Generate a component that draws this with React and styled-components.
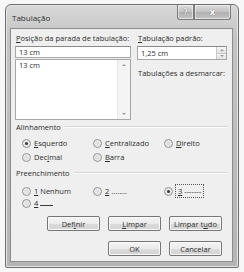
import styled, { createGlobalStyle } from "styled-components";

const GlobalStyle = createGlobalStyle`
  body {
    margin: 0;
    background: #f7f7f7;
    font-family: "Open Sans", "Noto Sans", sans-serif;
    font-size: 7.5px;
    color: #2c2c2c;
  }
`;

const Page = styled.div`
  width: 244px;
  height: 272px;
  padding: 4px 5px 0 5px;
  box-sizing: border-box;
`;

const Frame = styled.div`
  width: 234px;
  height: 264px;
  box-sizing: border-box;
  border: 1px solid #6e6e6e;
  border-radius: 6px 6px 2px 2px;
  background: linear-gradient(180deg, #d9d9d9 0%, #c4c4c4 12%, #b4b4b4 100%);
  box-shadow: inset 0 0 0 1px #e4e4e4;
  padding: 0 5px 5px 4px;
  display: flex;
  flex-direction: column;
`;

const TitleBar = styled.div`
  height: 23px;
  display: flex;
  justify-content: space-between;
  align-items: flex-start;
`;

const Title = styled.div`
  padding: 7px 0 0 2px;
  font-size: 8px;
  color: #2e2e2e;
`;

const Caption = styled.div`
  display: flex;
  margin-right: 2px;
`;

const CaptionButton = styled.div`
  width: ${(p) => p.$w}px;
  height: 15px;
  box-sizing: border-box;
  border: 1px solid #7c7c7c;
  border-top: none;
  border-radius: ${(p) => p.$r};
  background: linear-gradient(180deg, #dcdcdc 0%, #c2c2c2 50%, #b0b0b0 51%, #c4c4c4 100%);
  box-shadow: inset 0 0 0 1px rgba(255, 255, 255, 0.5);
  display: flex;
  align-items: center;
  justify-content: center;
  color: ${(p) => p.$c};
  font-family: "DejaVu Sans", sans-serif;
  font-weight: bold;
  font-size: ${(p) => p.$fs}px;
  text-shadow: 0 0 1px #555;
`;

const Content = styled.div`
  flex: 1;
  background: #efefef;
  border: 1px solid #8c8c8c;
  padding: 3px 4px 0 4px;
  display: flex;
  flex-direction: column;
`;

const TopGrid = styled.div`
  display: grid;
  grid-template-columns: 116px 90px;
  column-gap: 6px;
`;

const Column = styled.div`
  display: flex;
  flex-direction: column;
`;

const Label = styled.div`
  height: 12px;
  line-height: 12px;
  margin-left: 1px;
  margin-top: ${(p) => p.$mt || 0}px;
  white-space: nowrap;
`;

const Field = styled.div`
  height: ${(p) => p.$h}px;
  margin-top: 2px;
  box-sizing: border-box;
  background: #fff;
  border: 1px solid #a7a7a7;
  border-top-color: #8a8a8a;
  display: flex;
  align-items: center;
  padding-left: 3px;
  position: relative;
`;

const ListBox = styled.div`
  height: 61px;
  margin-top: 1px;
  box-sizing: border-box;
  background: #fff;
  border: 1px solid #a7a7a7;
  display: flex;
`;

const ListItems = styled.div`
  flex: 1;
  padding: 0 3px;
  line-height: 11px;
`;

const ScrollBar = styled.div`
  width: 12px;
  background: #f4f4f4;
  border-left: 1px solid #e6e6e6;
  display: flex;
  flex-direction: column;
  justify-content: space-between;
  align-items: center;
  padding: 4px 0;
`;

const Arrow = styled.div`
  width: 0;
  height: 0;
  border-left: 2px solid transparent;
  border-right: 2px solid transparent;
  ${(p) => (p.$up ? "border-bottom" : "border-top")}: 2px solid #9c9c9c;
`;

const Spin = styled.div`
  position: absolute;
  right: 0;
  top: 0;
  bottom: 0;
  width: 9px;
  display: flex;
  flex-direction: column;
  border-left: 1px solid #c8c8c8;
`;

const SpinHalf = styled.div`
  flex: 1;
  background: linear-gradient(180deg, #f6f6f6, #e2e2e2);
  border-bottom: ${(p) => (p.$up ? "1px solid #c8c8c8" : "none")};
  display: flex;
  align-items: center;
  justify-content: center;
`;

const GroupHeader = styled.div`
  display: flex;
  align-items: center;
  gap: 4px;
  height: 12px;
  margin: ${(p) => p.$mt}px 0 0 1px;
  &::after {
    content: "";
    flex: 1;
    height: 1px;
    background: #d6d6d6;
    border-bottom: 1px solid #fbfbfb;
  }
`;

const RadioGrid = styled.div`
  display: grid;
  grid-template-columns: 71px 71px auto;
  row-gap: ${(p) => p.$gap}px;
  margin-top: ${(p) => p.$mt}px;
  padding-left: 7px;
`;

const Option = styled.div`
  display: flex;
  align-items: center;
  gap: 3px;
  height: 12px;
  white-space: nowrap;
`;

const RadioDot = styled.span`
  width: 9px;
  height: 9px;
  box-sizing: border-box;
  border-radius: 50%;
  border: 1px solid #929292;
  background: radial-gradient(circle, #dadada 0%, #f4f4f4 100%);
  display: flex;
  align-items: center;
  justify-content: center;
  &::after {
    content: "";
    width: 3px;
    height: 3px;
    border-radius: 50%;
    background: ${(p) => (p.$on ? "#3c3c3c" : "transparent")};
  }
`;

const Focus = styled.span`
  outline: 1px dotted #555;
  outline-offset: 1px;
  padding: 0 1px;
  margin-left: 1px;
`;

const Leader = styled.span`
  display: inline-block;
  width: 13px;
  height: 6px;
  margin-left: 2px;
  border-bottom: 1px solid #3a3a3a;
`;

const ButtonRow = styled.div`
  display: flex;
  justify-content: flex-end;
  gap: 8px;
  margin-top: ${(p) => p.$mt}px;
  padding-right: 6px;
`;

const Button = styled.div`
  width: 53px;
  height: 15px;
  box-sizing: border-box;
  border: 1px solid #767676;
  border-radius: 2px;
  background: linear-gradient(180deg, #f4f4f4 0%, #ebebeb 50%, #dcdcdc 51%, #d3d3d3 100%);
  box-shadow: inset 0 0 0 1px #fafafa;
  display: flex;
  align-items: center;
  justify-content: center;
  color: #2e2e2e;
`;

const U = styled.span`
  text-decoration: underline;
`;

export default function App() {
  return (
    <>
      <GlobalStyle />
      <Page>
        <Frame>
          <TitleBar>
            <Title>Tabulação</Title>
            <Caption>
              <CaptionButton $w={17} $r="0 0 0 3px" $c="#e8e8e8" $fs={8}>
                ?
              </CaptionButton>
              <CaptionButton $w={37} $r="0 0 3px 0" $c="#fafafa" $fs={9}>
                x
              </CaptionButton>
            </Caption>
          </TitleBar>
          <Content>
            <TopGrid>
              <Column>
                <Label>
                  <U>P</U>osição da parada de tabulação:
                </Label>
                <Field $h={12}>13 cm</Field>
                <ListBox>
                  <ListItems>13 cm</ListItems>
                  <ScrollBar>
                    <Arrow $up />
                    <Arrow />
                  </ScrollBar>
                </ListBox>
              </Column>
              <Column>
                <Label>
                  <U>T</U>abulação padrão:
                </Label>
                <Field $h={14}>
                  1,25 cm
                  <Spin>
                    <SpinHalf $up>
                      <Arrow $up />
                    </SpinHalf>
                    <SpinHalf>
                      <Arrow />
                    </SpinHalf>
                  </Spin>
                </Field>
                <Label $mt={7}>Tabulações a desmarcar:</Label>
              </Column>
            </TopGrid>

            <GroupHeader $mt={1}>Alinhamento</GroupHeader>
            <RadioGrid $gap={2} $mt={4}>
              <Option>
                <RadioDot $on />
                <span>
                  <U>E</U>squerdo
                </span>
              </Option>
              <Option>
                <RadioDot />
                <span>
                  <U>C</U>entralizado
                </span>
              </Option>
              <Option>
                <RadioDot />
                <span>
                  <U>D</U>ireito
                </span>
              </Option>
              <Option>
                <RadioDot />
                <span>
                  Dec<U>i</U>mal
                </span>
              </Option>
              <Option>
                <RadioDot />
                <span>
                  <U>B</U>arra
                </span>
              </Option>
            </RadioGrid>

            <GroupHeader $mt={4}>Preenchimento</GroupHeader>
            <RadioGrid $gap={0} $mt={6}>
              <Option>
                <RadioDot />
                <span>
                  <U>1</U> Nenhum
                </span>
              </Option>
              <Option>
                <RadioDot />
                <span>
                  <U>2</U> ........
                </span>
              </Option>
              <Option>
                <RadioDot $on />
                <Focus>
                  <U>3</U> -------
                </Focus>
              </Option>
              <Option>
                <RadioDot />
                <span>
                  <U>4</U>
                  <Leader />
                </span>
              </Option>
            </RadioGrid>

            <ButtonRow $mt={7}>
              <Button>
                Def<U>i</U>nir
              </Button>
              <Button>
                <U>L</U>impar
              </Button>
              <Button>
                Limpar t<U>u</U>do
              </Button>
            </ButtonRow>
            <ButtonRow $mt={10}>
              <Button>OK</Button>
              <Button>Cancelar</Button>
            </ButtonRow>
          </Content>
        </Frame>
      </Page>
    </>
  );
}
